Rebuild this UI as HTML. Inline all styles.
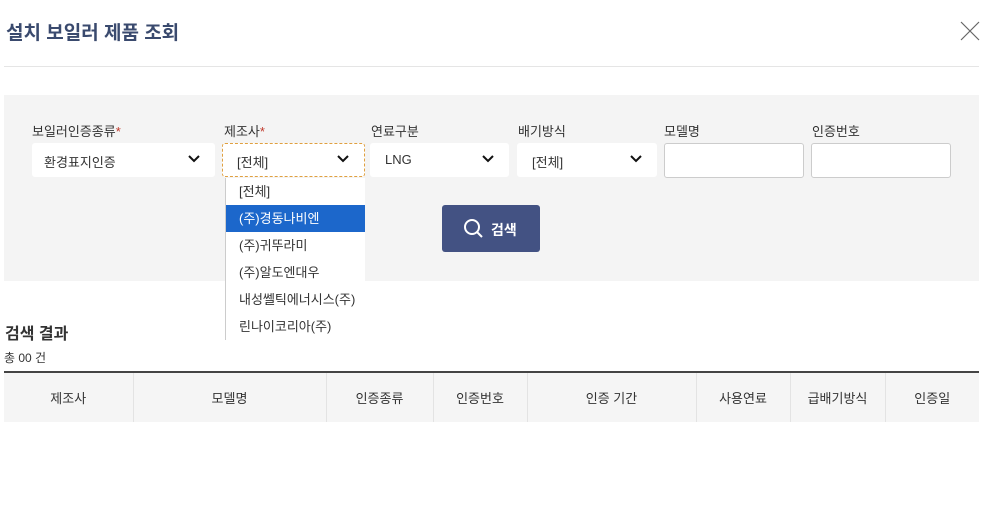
<!DOCTYPE html>
<html><head><meta charset="utf-8"><style>
*{box-sizing:border-box;margin:0;padding:0}
body{width:1000px;height:529px;background:#fff;font-family:"Liberation Sans","Noto Sans CJK KR",sans-serif;color:#222;position:relative;overflow:hidden}
.abs{position:absolute}
.lbl{position:absolute;top:121px;font-size:13px;color:#333}
.lbl b{color:#c0392b;font-weight:normal}
.sel{position:absolute;top:143px;height:34px;background:#fff;border-radius:3px;font-size:13px;padding:9px 0 0 12px;color:#333}
.chev{position:absolute;right:14px;top:11px;width:14px;height:10px}
.inp{position:absolute;top:143px;height:35px;background:#fff;border:1px solid #ccc;border-radius:3px}
.dd{position:absolute;left:225px;top:178px;width:140px;height:162px;background:#fff;border-left:1px solid #ccc;font-size:13px}
.dd div{height:27px;line-height:27px;padding-left:13px;color:#333}
.dd .on{background:#1c67cb;color:#fff}
th{font-weight:normal;font-size:13px;color:#333;border-left:1px solid #e3e3e3;height:50px}
th:first-child{border-left:none}
</style></head><body>
<div class="abs" style="left:6px;top:18px;font-size:19px;font-weight:bold;color:#3a4a6e">설치 보일러 제품 조회</div>
<svg class="abs" style="left:960px;top:21px" width="20" height="20"><path d="M1 1L19 19M19 1L1 19" stroke="#666" stroke-width="1.2"/></svg>
<div class="abs" style="left:4px;top:66px;width:975px;height:1px;background:#e5e5e5"></div>
<div class="abs" style="left:4px;top:95px;width:975px;height:186px;background:#f4f4f4"></div>
<div class="lbl" style="left:32px">보일러인증종류<b>*</b></div>
<div class="lbl" style="left:224px">제조사<b>*</b></div>
<div class="lbl" style="left:371px">연료구분</div>
<div class="lbl" style="left:518px">배기방식</div>
<div class="lbl" style="left:664px">모델명</div>
<div class="lbl" style="left:812px">인증번호</div>
<div class="sel" style="left:32px;width:183px">환경표지인증<svg class="chev" viewBox="0 0 14 10"><path d="M2 2L7 7L12 2" fill="none" stroke="#111" stroke-width="2"/></svg></div>
<div class="sel" style="left:222px;width:143px;border:1px dashed #e0a040;padding-left:14px;padding-top:8px">[전체]<svg class="chev" style="top:10px" viewBox="0 0 14 10"><path d="M2 2L7 7L12 2" fill="none" stroke="#111" stroke-width="2"/></svg></div>
<div class="sel" style="left:370px;width:139px;padding-left:15px">LNG<svg class="chev" viewBox="0 0 14 10"><path d="M2 2L7 7L12 2" fill="none" stroke="#111" stroke-width="2"/></svg></div>
<div class="sel" style="left:517px;width:140px;padding-left:15px">[전체]<svg class="chev" viewBox="0 0 14 10"><path d="M2 2L7 7L12 2" fill="none" stroke="#111" stroke-width="2"/></svg></div>
<div class="inp" style="left:664px;width:140px"></div>
<div class="inp" style="left:811px;width:140px"></div>
<div class="abs" style="left:442px;top:205px;width:98px;height:47px;background:#435283;border-radius:3px;color:#fff;font-size:14px;font-weight:bold">
<svg class="abs" style="left:21px;top:13px" width="22" height="22"><circle cx="9" cy="9" r="7" fill="none" stroke="#fff" stroke-width="2"/><path d="M14 14L19 19" stroke="#fff" stroke-width="2"/></svg>
<span class="abs" style="left:49px;top:15px">검색</span></div>
<div class="dd"><div>[전체]</div><div class="on">(주)경동나비엔</div><div>(주)귀뚜라미</div><div>(주)알도엔대우</div><div>내성쎌틱에너시스(주)</div><div>린나이코리아(주)</div></div>
<div class="abs" style="left:5px;top:320px;font-size:16px;font-weight:bold;color:#333">검색 결과</div>
<div class="abs" style="left:4px;top:349px;font-size:12px;color:#333">총 00 건</div>
<table class="abs" style="left:4px;top:371px;width:975px;border-collapse:collapse;border-top:2px solid #444;background:#f5f5f5">
<tr><th style="width:129px">제조사</th><th style="width:193px">모델명</th><th style="width:107px">인증종류</th><th style="width:94px">인증번호</th><th style="width:169px">인증 기간</th><th style="width:94px">사용연료</th><th style="width:95px">급배기방식</th><th>인증일</th></tr></table>
</body></html>
